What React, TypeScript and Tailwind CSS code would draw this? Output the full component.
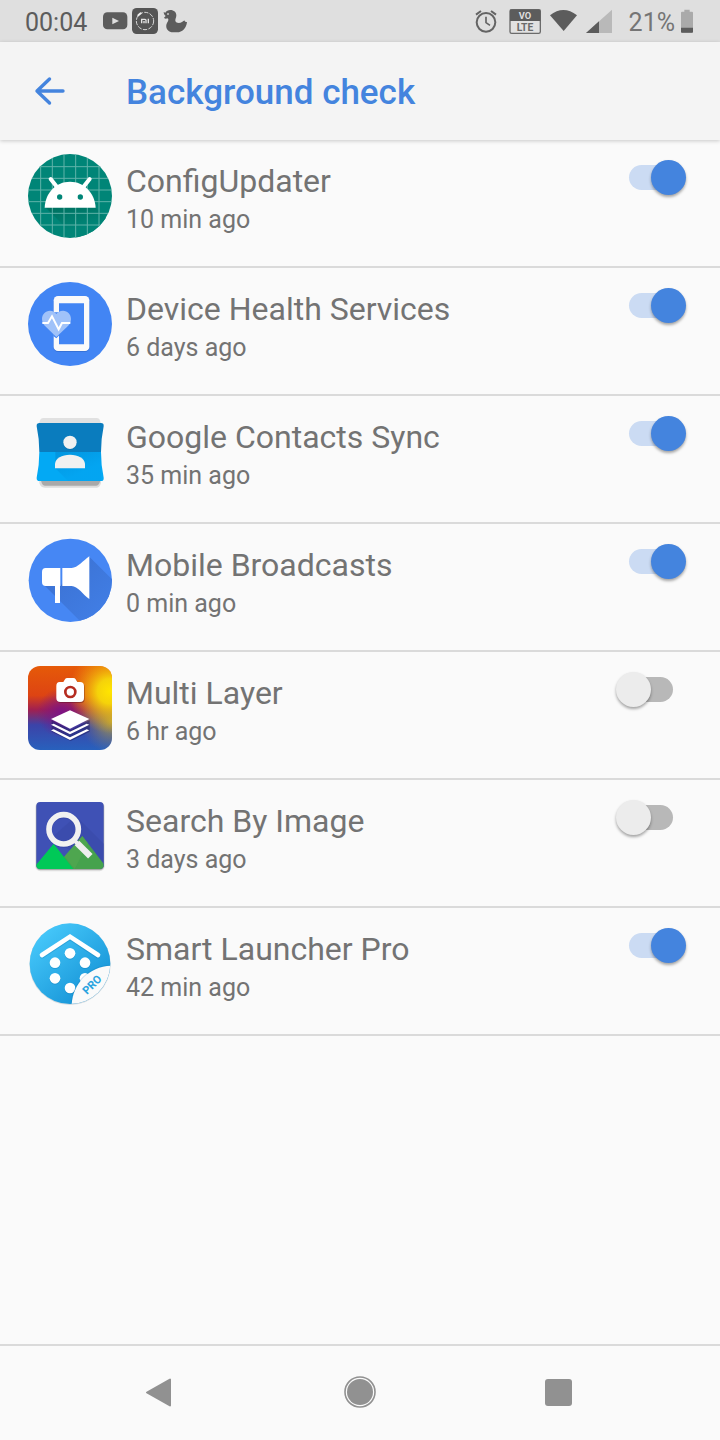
import { useState } from "react";
import type { ReactNode } from "react";

const ConfigUpdaterIcon = () => (
    <svg viewBox="24 27 252 252" className="size-[84px]" aria-hidden="true">
        <defs>
            <clipPath id="config-disc">
                <circle cx="150" cy="153" r="126" />
            </clipPath>
            <linearGradient id="config-shade" x1="0" y1="0" x2="0.6" y2="1">
                <stop offset="0" stopColor="#00705f" />
                <stop offset="0.7" stopColor="#008577" />
            </linearGradient>
        </defs>
        <g clipPath="url(#config-disc)">
            <path fill="#008577" d="M24 27h252v252H24z" />
            <path fill="url(#config-shade)" d="M76 187 168 279H300V262L226 187z" />
            <path
                stroke="#5fb3a9"
                strokeWidth="3"
                d="M62 27v252M97 27v252M132 27v252M167 27v252M202 27v252M237 27v252M24 65h252M24 100h252M24 135h252M24 170h252M24 205h252M24 240h252"
            />
        </g>
        <path stroke="#fff" strokeWidth="12" strokeLinecap="round" d="m92 102 19 24M209 102l-19 24" />
        <path fill="#fff" d="M74 188c2-45 34-78 76-78s74 33 77 78z" />
        <circle cx="119" cy="156" r="8" fill="#008577" />
        <circle cx="181" cy="156" r="8" fill="#008577" />
    </svg>
);

const DeviceHealthIcon = () => (
    <svg viewBox="24 27 252 252" className="size-[84px]" aria-hidden="true">
        <circle cx="150" cy="153" r="126" fill="#4285f4" />
        <path
            fill="#2f66c4"
            fillOpacity=".6"
            d="M114 72h81a13 13 0 0 1 13 13v139a13 13 0 0 1-13 13h-81a13 13 0 0 1-13-13V85a13 13 0 0 1 13-13z"
        />
        <path
            fill="#fafafa"
            d="M114 69h81a13 13 0 0 1 13 13v139a13 13 0 0 1-13 13h-81a13 13 0 0 1-13-13V82a13 13 0 0 1 13-13z"
        />
        <path fill="#4285f4" d="M117 91h75v123h-75z" />
        <path fill="#4285f4" d="M100 118h18v69l-9 9-9-7z" />
        <path
            fill="#a0c2f9"
            d="M109 192 79 163c-8-8-13-14-13-25 0-14 10-25 24-25 8 0 15 4 19 10 4-6 11-10 20-10 14 0 24 11 24 25 0 11-5 17-13 25z"
        />
        <path fill="none" stroke="#fff" strokeWidth="6" d="M67 150h17l12-20 20 39 10-19h25" />
    </svg>
);

const ContactsIcon = () => (
    <svg viewBox="24 27 252 252" className="size-[84px]" aria-hidden="true">
        <defs>
            <linearGradient id="contacts-shade" x1="0" y1="0" x2="1" y2="1">
                <stop offset="0" stopColor="#0288d1" />
                <stop offset="0.7" stopColor="#03a3f0" />
            </linearGradient>
        </defs>
        <path fill="#e1e1e1" d="M69 51h162q6 0 8 5l5 14H56l5-14q2-5 8-5z" />
        <path fill="#dcdcdc" d="M58 234h185v12q-4 14-12 14H74q-12 0-16-14z" />
        <path fill="#a9a9a9" d="M62 232h178v10q-4 12-12 12H76q-9 0-12-12z" />
        <path fill="#0a7cbe" d="M59 66h184q9 0 8 10-8 38-8 77H58q0-39-8-77-1-10 9-10z" />
        <path fill="#03a9f4" d="M58 153h185q0 39 8 77 1 10-8 10H59q-10 0-9-10 8-38 8-77z" />
        <path fill="url(#contacts-shade)" d="M58 153h48v49l38 38h99V153z" fillOpacity=".7" />
        <circle cx="150" cy="126" r="20" fill="#096ba3" fillOpacity=".5" />
        <circle cx="150" cy="124" r="20" fill="#f1f1f1" />
        <path fill="#f1f1f1" d="M105 202v-14c2-16 20-27 45-27s43 11 45 27v14z" />
    </svg>
);

const BroadcastIcon = () => (
    <svg viewBox="24 24 252 252" className="size-[84px]" aria-hidden="true">
        <defs>
            <clipPath id="broadcast-disc">
                <circle cx="151" cy="151" r="125" />
            </clipPath>
            <linearGradient id="broadcast-shade" x1="0" y1="0" x2="1" y2="1">
                <stop offset="0" stopColor="#3a6fcf" />
                <stop offset="1" stopColor="#4280e8" />
            </linearGradient>
        </defs>
        <g clipPath="url(#broadcast-disc)">
            <path fill="#4687f4" d="M24 24h252v252H24z" />
            <path fill="url(#broadcast-shade)" d="m72 165 111 111h93V148l-68-68-90 90z" />
        </g>
        <path fill="#fff" d="M77 114h44v54h-1v51h-15v-51H77q-11 0-11-12v-30q0-12 11-12z" />
        <path fill="#fff" d="M127 114h28c18 0 34-22 53-35v128c-19-13-35-39-53-39h-28z" />
    </svg>
);

const MultiLayerIcon = () => (
    <svg viewBox="24 24 252 252" className="size-[84px]" aria-hidden="true">
        <defs>
            <linearGradient id="layer-base" x1="0" y1="0" x2="0" y2="1">
                <stop offset="0" stopColor="#e65a08" />
                <stop offset="0.35" stopColor="#dd4413" />
                <stop offset="0.52" stopColor="#a12050" />
                <stop offset="0.7" stopColor="#3c43a8" />
                <stop offset="1" stopColor="#2861bd" />
            </linearGradient>
            <radialGradient id="layer-yellow" gradientUnits="userSpaceOnUse" cx="270" cy="100" r="125">
                <stop offset="0" stopColor="#ffe500" />
                <stop offset="0.3" stopColor="#f5d20a" />
                <stop offset="1" stopColor="#f0a010" stopOpacity="0" />
            </radialGradient>
            <radialGradient id="layer-purple" gradientUnits="userSpaceOnUse" cx="125" cy="165" r="75">
                <stop offset="0" stopColor="#7d1384" />
                <stop offset="1" stopColor="#7d1384" stopOpacity="0" />
            </radialGradient>
            <radialGradient id="layer-olive" gradientUnits="userSpaceOnUse" cx="276" cy="190" r="95">
                <stop offset="0" stopColor="#b3a53c" />
                <stop offset="1" stopColor="#777779" stopOpacity="0" />
            </radialGradient>
        </defs>
        <rect x="24" y="24" width="252" height="252" rx="36" fill="url(#layer-base)" />
        <rect x="24" y="24" width="252" height="252" rx="36" fill="url(#layer-purple)" />
        <rect x="24" y="24" width="252" height="252" rx="36" fill="url(#layer-olive)" />
        <rect x="24" y="24" width="252" height="252" rx="36" fill="url(#layer-yellow)" />
        <path
            fill="#5b1020"
            fillOpacity=".45"
            d="M121 75h11l5-9q2-4 7-4h18q5 0 7 4l5 9h8q12 0 12 12v36q0 12-12 12h-59q-12 0-12-12V87q0-12 10-12z"
        />
        <path
            fill="#fff"
            d="M119 72h11l5-8q2-4 7-4h18q5 0 7 4l5 8h8q12 0 12 12v36q0 12-12 12h-59q-12 0-12-12V84q0-12 10-12z"
        />
        <circle cx="151" cy="102" r="15" fill="#fff" stroke="#b52c20" strokeWidth="8" />
        <path fill="#1d1c63" fillOpacity=".5" d="m95 187 57 28 57-28v34l-57 28-57-28z" />
        <path fill="#fff" d="m150 157 58 26-58 29-57-29z" />
        <path fill="#fff" d="m93 200 8-3 49 24 50-24 8 3-58 29zM93 217l8-3 49 24 50-24 8 3-58 29z" />
    </svg>
);

const SearchImageIcon = () => (
    <svg viewBox="24 24 252 252" className="size-[84px]" aria-hidden="true">
        <defs>
            <clipPath id="search-tile">
                <rect x="49" y="48" width="202" height="201" rx="12" />
            </clipPath>
        </defs>
        <rect x="46" y="48" width="208" height="208" rx="15" fill="#dedede" />
        <rect x="48" y="50" width="204" height="202" rx="13" fill="#a9a9a9" />
        <g clipPath="url(#search-tile)">
            <path fill="#3f51b5" d="M24 24h252v252H24z" />
            <path fill="#3949a8" d="m168 90 90 90v70L90 160z" fillOpacity=".6" />
            <path fill="#46a24d" d="m187 150 67 87v20H130V215z" />
            <path fill="#56aa51" d="m133 211 54-61 17 22-40 77z" fillOpacity=".5" />
            <path fill="#00c957" d="m101 173 60 77H40l7-12z" />
        </g>
        <circle cx="131" cy="133" r="44" fill="none" stroke="#283593" strokeOpacity=".4" strokeWidth="16" />
        <circle cx="131" cy="130" r="44" fill="none" stroke="#f1f1f1" strokeWidth="17" />
        <path stroke="#f1f1f1" strokeWidth="12" d="m160 160 14 14" />
        <path stroke="#eee" strokeWidth="19" d="m171 171 40 40" />
    </svg>
);

const SmartLauncherIcon = () => (
    <svg viewBox="24 24 252 252" className="size-[84px]" aria-hidden="true">
        <defs>
            <linearGradient id="launcher-sky" x1="0.1" y1="0.1" x2="0.8" y2="0.9">
                <stop offset="0" stopColor="#47c9fb" />
                <stop offset="1" stopColor="#1593d6" />
            </linearGradient>
            <clipPath id="launcher-disc">
                <circle cx="150" cy="149" r="121" />
            </clipPath>
        </defs>
        <circle cx="150" cy="151" r="122" fill="#d5dce0" />
        <circle cx="150" cy="149" r="121" fill="url(#launcher-sky)" />
        <g fill="#0c6fa8" fillOpacity=".3">
            <circle cx="150" cy="121" r="16" />
            <circle cx="105" cy="149" r="16" />
            <circle cx="195" cy="149" r="16" />
            <circle cx="105" cy="196" r="16" />
            <circle cx="150" cy="225" r="16" />
        </g>
        <path
            fill="none"
            stroke="#0c6fa8"
            strokeOpacity=".3"
            strokeWidth="13"
            strokeLinecap="round"
            d="m66 127 84-55 84 55"
        />
        <path fill="none" stroke="#fff" strokeWidth="14" strokeLinecap="round" d="m66 123 84-55 84 55" />
        <g fill="#fff">
            <circle cx="150" cy="118" r="16" />
            <circle cx="105" cy="146" r="16" />
            <circle cx="195" cy="146" r="16" />
            <circle cx="105" cy="193" r="16" />
            <circle cx="195" cy="193" r="16" />
            <circle cx="150" cy="222" r="16" />
        </g>
        <g clipPath="url(#launcher-disc)">
            <path fill="#0c6fa8" fillOpacity=".2" d="M152 276c0-64 52-124 124-124v124z" />
            <path fill="#fafafa" d="M155 276c0-62 50-121 121-121v121z" />
        </g>
        <text
            x="216"
            y="223"
            textAnchor="middle"
            fontSize="33"
            fontWeight="700"
            fill="#2ba3df"
            transform="rotate(-45 216 212)"
        >
            PRO
        </text>
    </svg>
);

type AppEntry = {
    name: string;
    lastUsed: string;
    allowed: boolean;
    icon: ReactNode;
};

const apps: AppEntry[] = [
    { name: "ConfigUpdater", lastUsed: "10 min ago", allowed: true, icon: <ConfigUpdaterIcon /> },
    { name: "Device Health Services", lastUsed: "6 days ago", allowed: true, icon: <DeviceHealthIcon /> },
    { name: "Google Contacts Sync", lastUsed: "35 min ago", allowed: true, icon: <ContactsIcon /> },
    { name: "Mobile Broadcasts", lastUsed: "0 min ago", allowed: true, icon: <BroadcastIcon /> },
    { name: "Multi Layer", lastUsed: "6 hr ago", allowed: false, icon: <MultiLayerIcon /> },
    { name: "Search By Image", lastUsed: "3 days ago", allowed: false, icon: <SearchImageIcon /> },
    { name: "Smart Launcher Pro", lastUsed: "42 min ago", allowed: true, icon: <SmartLauncherIcon /> },
];

// YouTube, Mi and duck notifications
const NotificationIcons = () => (
    <svg viewBox="0 0 252 78" className="h-[26px] w-[84px]" aria-hidden="true">
        <rect x="0" y="13" width="73" height="51" rx="13" fill="#5c5c5c" />
        <path fill="#dfdfdf" d="m28 29 20 10-20 10z" />
        <rect x="87" y="0" width="78" height="78" rx="14" fill="#555" />
        <circle cx="126" cy="39" r="26" fill="none" stroke="#d5d5d5" strokeWidth="3" strokeDasharray="13 4" />
        <path fill="none" stroke="#eee" strokeWidth="6" strokeLinecap="round" d="m106 22 7-6" />
        <path fill="none" stroke="#e5e5e5" strokeWidth="4" d="M116 46V34h10q3 0 3 3v9M123 39v7M136 32v14" />
        <path
            fill="#5c5c5c"
            d="M182 12l5 2c3-5 8-8 15-8 11 0 18 7 18 16 0 7-4 12-3 17 2 7 14 7 20 3 4-3 7-6 8-4 1 3 3 4 7 4-2 18-14 31-30 31h-11c-15 0-23-11-21-23 2-7 7-11 6-17l-3-2c-4 2-8 1-10-2l5-5c-3-3-6-6-6-12z"
        />
        <circle cx="195" cy="18" r="3" fill="#c4c4c4" />
    </svg>
);

// alarm, VoLTE, wifi and signal
const SystemIcons = () => (
    <svg viewBox="45 24 414 75" className="h-[25px] w-[138px]" aria-hidden="true">
        <g fill="none" stroke="#646464">
            <circle cx="78" cy="64" r="28" strokeWidth="6" />
            <path strokeWidth="5" d="M78 47v18l12 8" />
            <path strokeWidth="6" d="m48 41 15-11M108 41 93 30" />
        </g>
        <rect x="150" y="26" width="91" height="71" rx="5" fill="#e2e2e2" stroke="#6b6b6b" strokeWidth="4" />
        <path fill="#5c5c5c" d="M150 26h91v34h-91z" />
        <text x="195" y="54" textAnchor="middle" fontSize="28" fontWeight="700" fill="#dfdfdf">
            VO
        </text>
        <text x="195" y="90" textAnchor="middle" fontSize="31" fontWeight="700" fill="#6b6b6b">
            LTE
        </text>
        <path fill="#5c5c5c" d="M270 43q40-32 81 0l-40 47z" />
        <path fill="#b9b9b9" d="M456 26v70h-78z" />
        <path fill="#5c5c5c" d="M417 61v35h-39z" />
    </svg>
);

const StatusBar = () => (
    <div className="flex h-[42px] items-center justify-between bg-[#dfdfdf] pr-[27px] pl-[25px] text-[25px]">
        <div className="flex items-center gap-4">
            <span className="pt-1 text-[#5c5c5c]">00:04</span>
            <NotificationIcons />
        </div>
        <div className="flex items-center">
            <SystemIcons />
            <span className="mr-1.5 ml-4 pt-1 text-[#757575]">21%</span>
            <svg viewBox="0 0 36 72" className="h-6 w-3" aria-hidden="true">
                <path fill="#aaa" d="M10 2h16v6h7q3 0 3 3v57q0 3-3 3H3q-3 0-3-3V11q0-3 3-3h7z" />
                <path fill="#5c5c5c" d="M0 56h36v12q0 3-3 3H3q-3 0-3-3z" />
            </svg>
        </div>
    </div>
);

const NavBar = () => (
    <nav className="flex h-24 items-center justify-around border-t-2 border-[#dadada] px-[59px] pb-0.5">
        <button type="button" aria-label="Back" className="flex size-16 items-center justify-center">
            <svg viewBox="0 0 32 32" className="size-8" aria-hidden="true">
                <path
                    fill="#919191"
                    stroke="#919191"
                    strokeWidth="2"
                    strokeLinejoin="round"
                    d="M4 16.5 27 3.5v26z"
                />
            </svg>
        </button>
        <button type="button" aria-label="Home" className="flex size-16 items-center justify-center">
            <svg viewBox="0 0 32 32" className="size-8" aria-hidden="true">
                <circle cx="16" cy="16" r="15" fill="none" stroke="#919191" strokeWidth="1.6" />
                <circle cx="16" cy="16" r="13" fill="#919191" />
            </svg>
        </button>
        <button type="button" aria-label="Recent apps" className="flex size-16 items-center justify-center">
            <svg viewBox="0 0 32 32" className="size-8" aria-hidden="true">
                <rect x="0" y="3" width="27" height="27" rx="3" fill="#919191" />
            </svg>
        </button>
    </nav>
);

const AppRow = ({ app, index }: { app: AppEntry; index: number }) => {
    const [allowed, setAllowed] = useState(app.allowed);
    const id = `app-${index}`;

    return (
        <li className="flex h-32 items-start border-b-2 border-[#dadada] pt-[14px] pr-[47px] pl-7">
            {app.icon}
            <label htmlFor={id} className="ml-[14px] flex-1 pt-2 text-[#737373]">
                <span className="block text-[32px] leading-[38px]">{app.name}</span>
                <span className="mt-1 block text-[25px] leading-8">{app.lastUsed}</span>
            </label>
            <input
                id={id}
                type="checkbox"
                role="switch"
                checked={allowed}
                onChange={(e) => setAllowed(e.target.checked)}
                className="relative mt-[11px] h-[25px] w-11 appearance-none rounded-full bg-[#b8b8b8] before:absolute before:-top-[5px] before:-left-[13px] before:size-[35px] before:rounded-full before:bg-[#ececec] before:shadow-[0_2px_3px_rgba(0,0,0,0.35)] checked:bg-[#cbdbf3] checked:before:left-[22px] checked:before:bg-[#4484de]"
            />
        </li>
    );
};

const App = () => {
    return (
        <div className="flex min-h-screen flex-col bg-[#fafafa] font-['Roboto',sans-serif]">
            <StatusBar />
            <header className="z-10 flex h-[98px] items-center bg-[#f4f4f4] pl-[34px] shadow-[0_1px_4px_rgba(0,0,0,0.2)]">
                <button type="button" aria-label="Navigate up" className="mr-[60px]">
                    <svg viewBox="0 0 32 32" className="size-8" aria-hidden="true">
                        <path
                            fill="none"
                            stroke="#4484de"
                            strokeWidth="3.4"
                            strokeLinecap="round"
                            strokeLinejoin="round"
                            d="M15.500 4 3 16l12.500 12M3 16h26"
                        />
                    </svg>
                </button>
                <h1 className="pt-1 text-[35px] font-medium text-[#4484de]">Background check</h1>
            </header>
            <main className="flex-1">
                <ul>
                    {apps.map((app, index) => (
                        <AppRow key={app.name} app={app} index={index} />
                    ))}
                </ul>
            </main>
            <NavBar />
        </div>
    );
};

export default App;
